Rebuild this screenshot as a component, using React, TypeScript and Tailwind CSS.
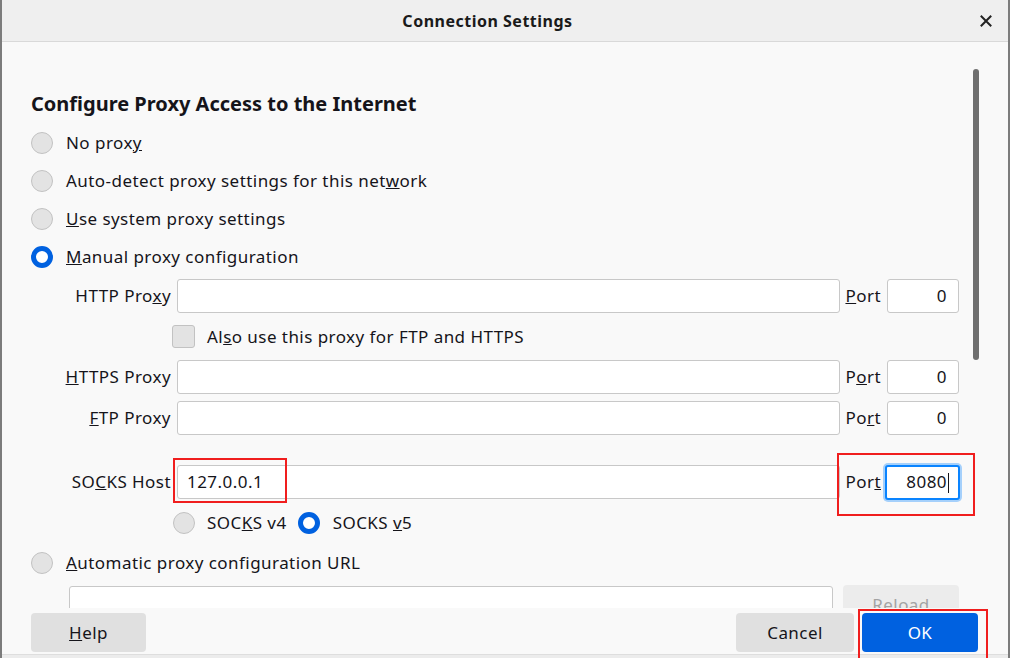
import React from 'react';

const font = "font-['Noto_Sans','DejaVu_Sans',sans-serif]";

const Radio = ({ checked }: { checked?: boolean }) =>
  checked ? (
    <span className="w-[22px] h-[22px] rounded-full border-[5px] border-[#0061e0] bg-white shrink-0" />
  ) : (
    <span className="w-[22px] h-[22px] rounded-full border border-[#c2c2c2] bg-[#e3e3e3] shrink-0" />
  );

const RadioRow = ({ checked, children }: { checked?: boolean; children: React.ReactNode }) => (
  <div className="flex items-center h-[38px] gap-[13px]">
    <Radio checked={checked} />
    <span>{children}</span>
  </div>
);

const Field = ({ value, focused, className = '' }: { value?: string; focused?: boolean; className?: string }) => (
  <div
    className={`h-[34px] rounded-[3px] bg-white flex items-center ${
      focused
        ? 'border-2 border-[#0a84ff] shadow-[0_0_0_2px_rgba(10,132,255,0.35)]'
        : 'border border-[#c8c8c8]'
    } ${className}`}
  >
    {value}
  </div>
);

const ProxyRow = ({
  label,
  port,
  portLabel,
  host,
  focused,
}: {
  label: React.ReactNode;
  port: string;
  portLabel: React.ReactNode;
  host?: string;
  focused?: boolean;
}) => (
  <div className="flex items-center h-[34px]">
    <div className="w-[140px] text-right shrink-0 whitespace-nowrap">{label}</div>
    <Field value={host} className="flex-1 ml-[6px] px-[9px]" />
    <span className="ml-[5px]">{portLabel}</span>
    <Field
      value={port}
      focused={focused}
      className={
        focused ? 'w-[75px] h-[35px] justify-end ml-[4px] -mr-[1px] pr-[11px]' : 'w-[72px] justify-end ml-[6px] pr-[11px]'
      }
    />
  </div>
);

export default function App() {
  return (
    <div className={`${font} relative w-[1010px] h-[658px] flex flex-col bg-[#f9f9f9] border-x-2 border-[#7c7c7c] text-[17px] tracking-[0.45px] text-[#15141a] overflow-hidden`}>
      {/* title bar */}
      <div className="h-[42px] shrink-0 flex items-center bg-[#efefef] border-b border-[#d9d9d9]">
        <div className="flex-1 text-center font-bold text-[16px] tracking-[0.5px] text-[#1a1a1a]">Connection Settings</div>
        <div className="w-[35px] pl-[7px] flex items-center">
          <svg width="12" height="12" viewBox="0 0 12 12" stroke="#222" strokeWidth="2" strokeLinecap="square">
            <path d="M1.5 1.5 L10.5 10.5 M10.5 1.5 L1.5 10.5" />
          </svg>
        </div>
      </div>

      {/* scrolling content */}
      <div className="h-[566px] shrink-0 overflow-hidden pl-[29px] pr-[49px] pt-[48px]">
        <h1 className="text-[20px] tracking-normal font-bold leading-[28px] mb-[6px]">Configure Proxy Access to the Internet</h1>
        <RadioRow>No prox<u>y</u></RadioRow>
        <RadioRow>Auto-detect proxy settings for this net<u>w</u>ork</RadioRow>
        <RadioRow><u>U</u>se system proxy settings</RadioRow>
        <RadioRow checked><u>M</u>anual proxy configuration</RadioRow>

        <div className="mt-[3px]">
          <ProxyRow label={<>HTTP Pro<u>x</u>y</>} portLabel={<><u>P</u>ort</>} port="0" />
          <div className="flex items-center h-[47px] pl-[141px] gap-[12px]">
            <span className="w-[23px] h-[23px] rounded-[3px] border border-[#c2c2c2] bg-[#e3e3e3]" />
            <span>Al<u>s</u>o use this proxy for FTP and HTTPS</span>
          </div>
          <ProxyRow label={<><u>H</u>TTPS Proxy</>} portLabel={<>P<u>o</u>rt</>} port="0" />
          <div className="h-[7px]" />
          <ProxyRow label={<><u>F</u>TP Proxy</>} portLabel={<>Po<u>r</u>t</>} port="0" />
          <div className="h-[30px]" />
          <ProxyRow
            label={<>SO<u>C</u>KS Host</>}
            portLabel={<>Por<u>t</u></>}
            host="127.0.0.1"
            port={'8080'}
            focused
          />
          <div className="flex items-center h-[45px] pt-[3px] pl-[142px]">
            <Radio />
            <span className="ml-[12px]">SOC<u>K</u>S v4</span>
            <span className="ml-[11px] flex"><Radio checked /></span>
            <span className="ml-[13px]">SOCKS <u>v</u>5</span>
          </div>
        </div>

        <RadioRow><u>A</u>utomatic proxy configuration URL</RadioRow>
        <div className="flex items-start mt-[4px] pl-[38px]">
          <Field className="flex-1" />
          <button className="ml-[10px] w-[116px] h-[39px] -mt-[1px] rounded-[4px] bg-[#ececec] text-[#a3a3a3]">Reload</button>
        </div>
      </div>

      {/* footer */}
      <div className="flex-1 flex items-start pt-[5px] pl-[29px] pr-[30px] bg-[#f9f9f9]">
        <button className="w-[115px] h-[39px] rounded-[4px] bg-[#e0e0e0]"><u>H</u>elp</button>
        <div className="flex-1" />
        <button className="w-[118px] h-[39px] rounded-[4px] bg-[#e0e0e0]">Cancel</button>
        <button className="ml-[8px] w-[116px] h-[39px] rounded-[4px] bg-[#0061e0] text-white">OK</button>
      </div>
      <div className="h-[4px] shrink-0 bg-[#ececec] border-t border-[#dedede]" />

      {/* overlay scrollbar */}
      <div className="absolute left-[971px] top-[69px] w-[6px] h-[291px] rounded-full bg-[#6f6f6f]" />

      {/* red annotation boxes */}
      <div className="absolute left-[171px] top-[458px] w-[114px] h-[45px] border-2 border-[#f01e1e]" />
      <div className="absolute left-[835px] top-[453px] w-[138px] h-[63px] border-2 border-[#f01e1e]" />
      <div className="absolute left-[856px] top-[609px] w-[130px] h-[52px] border-2 border-[#f01e1e]" />
      {/* caret */}
      <div className="absolute left-[946px] top-[473px] w-px h-[20px] bg-[#15141a]" />
    </div>
  );
}
